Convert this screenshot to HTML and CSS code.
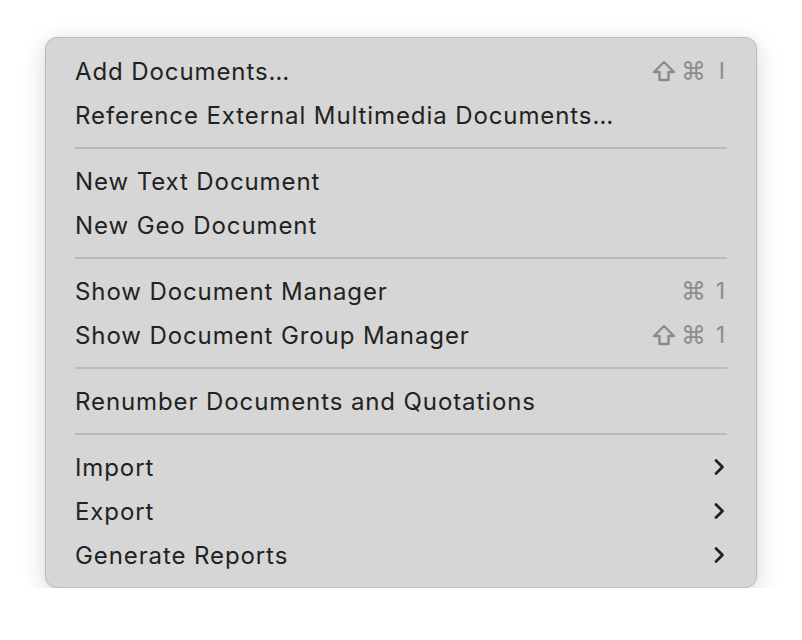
FILE: index.html
```html
<!DOCTYPE html>
<html lang="en">
<head>
  <meta charset="UTF-8" />
  <title>Documents Menu</title>
  <link rel="stylesheet" href="styles.css">
</head>
<body>
  <div class="menu">
    <div class="item"><span>Add Documents…</span><span class="keys"><svg class="shift" viewBox="0 0 24 22"><path d="M12 2 L22 12 L16.5 12 L16.5 20 L7.5 20 L7.5 12 L2 12 Z" /></svg><i>⌘</i><b>I</b></span></div>
    <div class="item"><span>Reference External Multimedia Documents…</span></div>
    <div class="sep"></div>
    <div class="item"><span>New Text Document</span></div>
    <div class="item"><span>New Geo Document</span></div>
    <div class="sep"></div>
    <div class="item"><span>Show Document Manager</span><span class="keys"><i>⌘</i><b>1</b></span></div>
    <div class="item"><span>Show Document Group Manager</span><span class="keys"><svg class="shift" viewBox="0 0 24 22"><path d="M12 2 L22 12 L16.5 12 L16.5 20 L7.5 20 L7.5 12 L2 12 Z" /></svg><i>⌘</i><b>1</b></span></div>
    <div class="sep"></div>
    <div class="item"><span>Renumber Documents and Quotations</span></div>
    <div class="sep"></div>
    <div class="item"><span>Import</span><svg class="chev" viewBox="0 0 12 18"><path d="M3 2.5 L9.5 9 L3 15.5" /></svg></div>
    <div class="item"><span>Export</span><svg class="chev" viewBox="0 0 12 18"><path d="M3 2.5 L9.5 9 L3 15.5" /></svg></div>
    <div class="item"><span>Generate Reports</span><svg class="chev" viewBox="0 0 12 18"><path d="M3 2.5 L9.5 9 L3 15.5" /></svg></div>
  </div>
</body>
</html>
```

FILE: styles.css
```css
* {
  box-sizing: border-box;
}
body {
  margin: 0;
  background: #ffffff;
  font-family: 'Inter', 'Noto Sans', sans-serif;
  color: #222222;
}
.menu {
  margin: 37px 0 0 45px;
  width: 712px;
  padding: 11px 0 10px;
  background: #d6d6d6;
  border: 1px solid #bdbdbd;
  border-radius: 12px;
  box-shadow: 0 6px 24px rgba(0,0,0,0.16), 0 0 2px rgba(0,0,0,0.1);
}
.item {
  display: flex;
  align-items: center;
  justify-content: space-between;
  height: 44px;
  padding: 0 31px 0 29px;
  font-size: 24px;
  letter-spacing: 0.9px;
}
.keys {
  color: #8c8c8c;
  display: flex;
  align-items: center;
  letter-spacing: 0;
}
.shift {
  width: 24px;
  height: 22px;
}
.shift path {
  fill: none;
  stroke: #8c8c8c;
  stroke-width: 2.4;
  stroke-linejoin: round;
}
.keys i {
  font-style: normal;
  font-family: 'DejaVu Sans', sans-serif;
  font-size: 25px;
  margin-left: 5px;
}
.keys b {
  font-weight: normal;
  font-family: 'Inter', sans-serif;
  font-size: 23px;
  margin-left: 9px;
  min-width: 10px;
  text-align: right;
}
.keys b.ltr {
  margin-right: 3px;
}
.chev {
  width: 12px;
  height: 18px;
}
.chev path {
  fill: none;
  stroke: #222222;
  stroke-width: 2.8;
  stroke-linecap: round;
  stroke-linejoin: round;
}
.sep {
  height: 2px;
  margin: 10px 29px 10px 29px;
  background: #bababa;
}
```
